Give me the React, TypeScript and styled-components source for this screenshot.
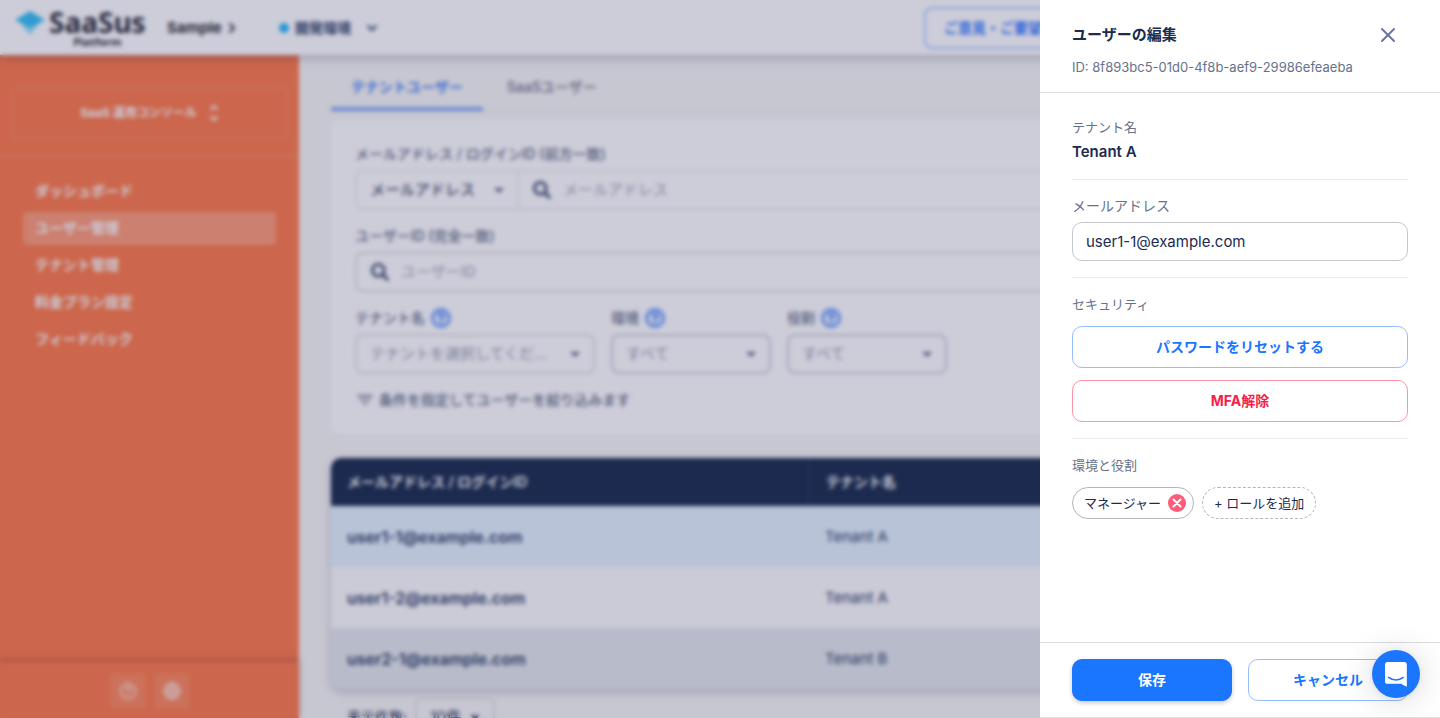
import React from 'react';
import styled, { createGlobalStyle, css } from 'styled-components';
import { ChevronDown, ChevronRight, CircleHelp, Globe, X } from 'lucide-react';
import { FaSearch } from 'react-icons/fa';
import { MdArrowDropDown, MdFilterList } from 'react-icons/md';

const GlobalStyle = createGlobalStyle`
  *, *::before, *::after { box-sizing: border-box; }
  body {
    margin: 0;
    overflow: hidden;
    background: #f7f7f5;
    color: #1c2b50;
    font-family: Inter, "Noto Sans CJK JP", sans-serif;
    font-size: 14px;
    line-height: 20px;
  }
  button, input, select { font: inherit; color: inherit; margin: 0; }
  button { cursor: pointer; }
`;

/* ---------- Console page ---------- */

const Page = styled.div`
  display: flex;
  flex-direction: column;
  height: 100vh;
  overflow: hidden;
`;

const TopBar = styled.header`
  display: flex;
  align-items: center;
  flex: none;
  height: 55px;
  padding-left: 15px;
  background: #fff;
  box-shadow: 0 2px 10px rgba(20, 20, 60, 0.3);
  z-index: 1;
`;

const Brand = styled.a`
  display: flex;
  gap: 4px;
  width: 152px;
  color: #222430;
  text-decoration: none;
`;

const BrandMark = styled.svg`
  flex: none;
  width: 30px;
  height: 24px;
  margin-top: 3px;
`;

const BrandText = styled.span`
  display: flex;
  flex-direction: column;
  align-items: center;
  font-family: "Noto Sans", sans-serif;
  font-weight: 700;
`;

const BrandName = styled.span`
  font-size: 28px;
  line-height: 28px;
`;

const BrandSub = styled.span`
  font-size: 11px;
  line-height: 12px;
`;

const Crumb = styled.a`
  display: flex;
  align-items: center;
  gap: 2px;
  width: 112px;
  color: #1b1d26;
  font-size: 15px;
  font-weight: 700;
  text-decoration: none;
`;

const EnvButton = styled.button`
  display: flex;
  align-items: center;
  gap: 6px;
  padding: 0;
  border: 0;
  background: none;
  font-weight: 700;
  color: #24365f;

  svg { margin-left: 7px; }
`;

const EnvDot = styled.span`
  width: 10px;
  height: 10px;
  border-radius: 50%;
  background: #20b4fa;
`;

const TopActions = styled.div`
  width: 516px;
  margin-left: auto;
`;

const FeedbackButton = styled.button`
  height: 42px;
  padding: 0 18px;
  border: 2px solid #a9c8ff;
  border-radius: 8px;
  background: #fff;
  color: #1a6aff;
  font-weight: 700;
`;

const Body = styled.div`
  display: flex;
  flex: 1;
  min-height: 0;
`;

const Sidebar = styled.aside`
  display: flex;
  flex-direction: column;
  flex: none;
  width: 299px;
  background: #fe7643;
  color: #fff;
`;

const SwitcherArea = styled.div`
  padding: 32px 11px 16px;
  border-bottom: 2px solid rgba(255, 255, 255, 0.15);
`;

const Switcher = styled.button`
  display: flex;
  align-items: center;
  justify-content: center;
  gap: 12px;
  width: 100%;
  height: 52px;
  border: 2px solid rgba(255, 255, 255, 0.12);
  border-radius: 6px;
  background: none;
  font-size: 12px;
  font-weight: 700;
`;

const Menu = styled.nav`
  display: flex;
  flex-direction: column;
  gap: 4px;
  padding: 18px 23px;
`;

const MenuLink = styled.a<{ $active?: boolean }>`
  padding: 6px 12px 7px;
  border-radius: 3px;
  background: ${({ $active }) => ($active ? 'rgba(255, 255, 255, 0.25)' : 'none')};
  color: #fff;
  font-weight: 700;
  text-decoration: none;
`;

const SidebarFooter = styled.div`
  display: flex;
  justify-content: center;
  gap: 8px;
  margin-top: auto;
  padding: 11px 0 9px;
  box-shadow: 0 -2px 6px rgba(90, 40, 60, 0.35);
`;

const SquareButton = styled.button`
  display: flex;
  align-items: center;
  justify-content: center;
  width: 36px;
  height: 36px;
  padding: 0;
  border: 0;
  border-radius: 4px;
  background: rgba(255, 255, 255, 0.1);
`;

const Main = styled.main`
  flex: 1;
  min-width: 0;
  padding: 12px 32px 0;
`;

const Tabs = styled.div`
  display: flex;
  gap: 4px;
  border-bottom: 1px solid #e8e8ea;
`;

const Tab = styled.button<{ $active?: boolean }>`
  height: 44px;
  padding: 0 20px;
  border: 0;
  border-bottom: 4px solid ${({ $active }) => ($active ? '#7da6f5' : 'transparent')};
  background: none;
  color: ${({ $active }) => ($active ? '#3f7ef7' : '#676b80')};
  font-weight: ${({ $active }) => ($active ? 600 : 500)};
`;

const FilterCard = styled.section`
  display: flex;
  flex-direction: column;
  gap: 16px;
  margin-top: 8px;
  padding: 24px;
  border-radius: 8px;
  background: #fff;
`;

const Field = styled.div<{ $width?: number }>`
  display: flex;
  flex-direction: column;
  gap: 6px;
  width: ${({ $width }) => ($width ? `${$width}px` : 'auto')};
`;

const FieldLabel = styled.label`
  display: flex;
  align-items: center;
  gap: 6px;
  color: #59637d;
  font-weight: 500;
`;

const FieldRow = styled.div`
  display: flex;
  gap: 16px;
`;

const Box = styled.div<{ $tone?: 'soft' | 'strong' }>`
  display: flex;
  height: 40px;
  border: 2px solid
    ${({ $tone }) => ($tone === 'soft' ? '#ededf0' : $tone === 'strong' ? '#c9cdd9' : '#dddde1')};
  border-radius: 8px;
`;

const SearchWrap = styled.div`
  display: flex;
  align-items: center;
  flex: 1;
  gap: 12px;
  padding: 0 14px;
  color: #3a4769;
`;

const SearchInput = styled.input`
  flex: 1;
  min-width: 0;
  padding: 0;
  border: 0;
  outline: 0;
  background: none;
  font-size: 15px;

  &::placeholder { color: #9aa1b2; opacity: 1; }
`;

const SelectWrap = styled.div<{ $divided?: boolean }>`
  display: flex;
  position: relative;
  align-items: center;
  flex: ${({ $divided }) => ($divided ? 'none' : '1')};
  width: ${({ $divided }) => ($divided ? '162px' : 'auto')};
  border-right: ${({ $divided }) => ($divided ? '2px solid #ededf0' : '0')};

  svg {
    position: absolute;
    right: 6px;
    color: #59637d;
    pointer-events: none;
  }
`;

const Select = styled.select<{ $muted?: boolean }>`
  appearance: none;
  width: 100%;
  height: 100%;
  padding: 0 24px 0 13px;
  border: 0;
  background: none;
  color: ${({ $muted }) => ($muted ? '#8f97aa' : '#3d4865')};
  font-size: 15px;
  font-weight: ${({ $muted }) => ($muted ? 400 : 500)};
`;

const Hint = styled.p`
  display: flex;
  align-items: center;
  gap: 4px;
  margin: 0;
  color: #59637d;
  font-weight: 500;
`;

const UserTable = styled.table`
  width: 100%;
  margin-top: 24px;
  border-spacing: 0;
  border-radius: 10px;
  overflow: hidden;
  table-layout: fixed;
  box-shadow: 0 3px 8px rgba(30, 30, 90, 0.25);
`;

const HeadCell = styled.th<{ $wide?: boolean }>`
  width: ${({ $wide }) => ($wide ? '478px' : 'auto')};
  height: 48px;
  padding: 0 16px;
  border-left: ${({ $wide }) => ($wide ? '0' : '1px solid #1f3358')};
  background: #132647;
  color: #fff;
  text-align: left;
  font-weight: 600;
`;

const Row = styled.tr<{ $tone: string }>`
  background: ${({ $tone }) => $tone};
`;

const Cell = styled.td<{ $strong?: boolean }>`
  height: 61px;
  padding: 0 16px;
  font-size: ${({ $strong }) => ($strong ? '16px' : '15px')};
  font-weight: ${({ $strong }) => ($strong ? 600 : 400)};
  color: #24345c;
`;

const Pager = styled.div`
  display: flex;
  align-items: center;
  gap: 8px;
  padding: 8px 16px;
`;

const PagerLabel = styled.label`
  color: #3d4865;
  font-weight: 500;
`;

const PagerBox = styled(Box)`
  width: 80px;
`;

/* ---------- Edit drawer ---------- */

const Backdrop = styled.div`
  position: fixed;
  inset: 0;
  z-index: 10;
  background: rgba(55, 55, 103, 0.25);
  backdrop-filter: blur(2px);
`;

const Drawer = styled.aside`
  display: flex;
  position: fixed;
  top: 0;
  right: 0;
  bottom: 0;
  z-index: 20;
  flex-direction: column;
  width: 400px;
  border-bottom: 1px solid #e2e2e6;
  background: #fff;
`;

const DrawerHeader = styled.header`
  padding: 24px 32px 15px;
  border-bottom: 1px solid #dcdde1;
`;

const TitleRow = styled.div`
  display: flex;
  align-items: center;
  justify-content: space-between;
  height: 22px;
`;

const Title = styled.h2`
  margin: 0;
  font-size: 15px;
  line-height: 22px;
  font-weight: 700;
`;

const CloseButton = styled.button`
  display: flex;
  padding: 0 8px;
  border: 0;
  background: none;
  color: #6d73a0;
`;

const UserId = styled.p`
  margin: 11px 0 0;
  color: #66718a;
  font-size: 13px;
`;

const DrawerBody = styled.div`
  flex: 1;
  min-height: 0;
  padding: 8px 32px;
  overflow: auto;
`;

const Section = styled.section`
  padding: 16px 0;

  & + & { border-top: 1px solid #e9eaec; }
`;

const labelStyle = css`
  display: block;
  margin: 0;
  color: #66718a;
  font-weight: 400;
  line-height: 20px;
`;

const SectionTitle = styled.h3`
  ${labelStyle}
  font-size: 13px;
`;

const InputLabel = styled.label`
  ${labelStyle}
  margin-bottom: 6px;
  font-size: 14px;
`;

const TenantName = styled.p`
  margin: 4px 0 0;
  font-size: 15px;
  line-height: 22px;
  font-weight: 600;
`;

const TextInput = styled.input`
  display: block;
  width: 100%;
  height: 39px;
  padding: 0 13px;
  border: 1px solid #c6c7ca;
  border-radius: 10px;
  outline: 0;
  background: #fff;
  font-size: 15px;
`;

const ButtonStack = styled.div`
  display: grid;
  gap: 12px;
  margin-top: 12px;
`;

const tones = {
  primary: css`
    border-color: #1a75ff;
    background: #1a75ff;
    color: #fff;
    box-shadow: 0 2px 4px rgba(40, 40, 60, 0.25);
  `,
  outline: css`
    border-color: #94bcff;
    background: #fff;
    color: #1a75ff;
  `,
  danger: css`
    border-color: #ff94a5;
    background: #fff;
    color: #f71d4c;
  `,
};

const ActionButton = styled.button<{ $tone: keyof typeof tones }>`
  height: 42px;
  padding: 0 12px;
  border: 1px solid;
  border-radius: 10px;
  font-weight: 700;
  ${({ $tone }) => tones[$tone]}
`;

const Chips = styled.div`
  display: flex;
  gap: 8px;
  margin-top: 12px;
`;

const chipStyle = css`
  display: flex;
  align-items: center;
  height: 32px;
  border: 1px solid #b4b6bb;
  border-radius: 16px;
  background: #fff;
  font-size: 13px;
`;

const RoleChip = styled.span`
  ${chipStyle}
  gap: 7px;
  padding: 0 7px 0 11px;
`;

const RemoveRole = styled.button`
  display: flex;
  padding: 0;
  border: 0;
  background: none;
`;

const AddRole = styled.button`
  ${chipStyle}
  padding: 0 11px;
  border-style: dashed;
`;

const DrawerFooter = styled.footer`
  display: grid;
  grid-template-columns: 1fr 1fr;
  gap: 16px;
  padding: 16px 32px;
  border-top: 1px solid #dcdde1;
`;

const ChatLauncher = styled.button`
  display: flex;
  position: fixed;
  right: 20px;
  bottom: 20px;
  z-index: 30;
  align-items: center;
  justify-content: center;
  width: 48px;
  height: 48px;
  padding: 0;
  border: 0;
  border-radius: 50%;
  background: #1a75ff;
  box-shadow: 0 1px 6px rgba(0, 0, 0, 0.08), 0 2px 32px rgba(0, 0, 0, 0.16);
`;

const menu = ['ダッシュボード', 'ユーザー管理', 'テナント管理', '料金プラン設定', 'フィードバック'];

const users = [
  { email: 'user1-1@example.com', tenant: 'Tenant A', tone: '#e4f2fe' },
  { email: 'user1-2@example.com', tenant: 'Tenant A', tone: '#fcfcfc' },
  { email: 'user2-1@example.com', tenant: 'Tenant B', tone: '#e3e8eb' },
];

const scopes = [
  { id: 'tenant', label: 'テナント名', value: 'テナントを選択してくだ...', width: 240, strong: false },
  { id: 'env', label: '環境', value: 'すべて', width: 160, strong: true },
  { id: 'role', label: '役割', value: 'すべて', width: 160, strong: true },
];

function Console() {
  return (
    <Page>
      <TopBar>
        <Brand href="#">
          <BrandMark viewBox="0 0 30 24" aria-hidden="true">
            <path d="M15 0 30 9 15 17 0 9Z" fill="#2dbdf3" />
            <path d="M5 12 15 17 25 12 15 24Z" fill="#8fdcfa" />
          </BrandMark>
          <BrandText>
            <BrandName>SaaSus</BrandName>
            <BrandSub>Platform</BrandSub>
          </BrandText>
        </Brand>
        <Crumb href="#">
          Sample <ChevronRight size={16} strokeWidth={3} />
        </Crumb>
        <EnvButton>
          <EnvDot />
          開発環境
          <ChevronDown size={16} strokeWidth={3} />
        </EnvButton>
        <TopActions>
          <FeedbackButton>ご意見・ご要望</FeedbackButton>
        </TopActions>
      </TopBar>
      <Body>
        <Sidebar>
          <SwitcherArea>
            <Switcher>
              SaaS 運用コンソール
              <svg width="10" height="18" viewBox="0 0 10 18" fill="none" stroke="currentColor" strokeWidth="2">
                <path d="M1.5 5.5 5 2l3.5 3.5M1.5 12.5 5 16l3.5-3.5" />
              </svg>
            </Switcher>
          </SwitcherArea>
          <Menu>
            {menu.map((item, i) => (
              <MenuLink key={item} href="#" $active={i === 1}>
                {item}
              </MenuLink>
            ))}
          </Menu>
          <SidebarFooter>
            <SquareButton aria-label="ヘルプ">
              <CircleHelp size={18} strokeWidth={3} opacity={0.6} />
            </SquareButton>
            <SquareButton aria-label="言語">
              <Globe size={18} strokeWidth={3} opacity={0.7} />
            </SquareButton>
          </SidebarFooter>
        </Sidebar>
        <Main>
          <Tabs>
            <Tab $active>テナントユーザー</Tab>
            <Tab>SaaSユーザー</Tab>
          </Tabs>
          <FilterCard>
            <Field>
              <FieldLabel htmlFor="f-mail">メールアドレス / ログインID (前方一致)</FieldLabel>
              <Box $tone="soft">
                <SelectWrap $divided>
                  <Select aria-label="検索対象">
                    <option>メールアドレス</option>
                  </Select>
                  <MdArrowDropDown size={24} />
                </SelectWrap>
                <SearchWrap>
                  <FaSearch size={18} />
                  <SearchInput id="f-mail" placeholder="メールアドレス" />
                </SearchWrap>
              </Box>
            </Field>
            <Field>
              <FieldLabel htmlFor="f-id">ユーザーID (完全一致)</FieldLabel>
              <Box>
                <SearchWrap>
                  <FaSearch size={18} />
                  <SearchInput id="f-id" placeholder="ユーザーID" />
                </SearchWrap>
              </Box>
            </Field>
            <FieldRow>
              {scopes.map((s) => (
                <Field key={s.id} $width={s.width}>
                  <FieldLabel htmlFor={`f-${s.id}`}>
                    {s.label}
                    <CircleHelp size={20} strokeWidth={4} color="#6a9cfc" />
                  </FieldLabel>
                  <Box $tone={s.strong ? 'strong' : undefined}>
                    <SelectWrap>
                      <Select id={`f-${s.id}`} $muted>
                        <option>{s.value}</option>
                      </Select>
                      <MdArrowDropDown size={24} />
                    </SelectWrap>
                  </Box>
                </Field>
              ))}
            </FieldRow>
            <Hint>
              <MdFilterList size={20} />
              条件を指定してユーザーを絞り込みます
            </Hint>
          </FilterCard>
          <UserTable>
            <thead>
              <tr>
                <HeadCell $wide>メールアドレス / ログインID</HeadCell>
                <HeadCell>テナント名</HeadCell>
              </tr>
            </thead>
            <tbody>
              {users.map((u) => (
                <Row key={u.email} $tone={u.tone}>
                  <Cell $strong>{u.email}</Cell>
                  <Cell>{u.tenant}</Cell>
                </Row>
              ))}
            </tbody>
          </UserTable>
          <Pager>
            <PagerLabel htmlFor="f-size">表示件数:</PagerLabel>
            <PagerBox>
              <SelectWrap>
                <Select id="f-size">
                  <option>10件</option>
                </Select>
                <MdArrowDropDown size={24} />
              </SelectWrap>
            </PagerBox>
          </Pager>
        </Main>
      </Body>
    </Page>
  );
}

function EditDrawer() {
  return (
    <Drawer role="dialog" aria-labelledby="drawer-title">
      <DrawerHeader>
        <TitleRow>
          <Title id="drawer-title">ユーザーの編集</Title>
          <CloseButton aria-label="閉じる">
            <X size={24} strokeWidth={2} />
          </CloseButton>
        </TitleRow>
        <UserId>ID: 8f893bc5-01d0-4f8b-aef9-29986efeaeba</UserId>
      </DrawerHeader>
      <DrawerBody>
        <Section>
          <SectionTitle>テナント名</SectionTitle>
          <TenantName>Tenant A</TenantName>
        </Section>
        <Section>
          <InputLabel htmlFor="email">メールアドレス</InputLabel>
          <TextInput id="email" type="email" defaultValue="user1-1@example.com" />
        </Section>
        <Section>
          <SectionTitle>セキュリティ</SectionTitle>
          <ButtonStack>
            <ActionButton $tone="outline">パスワードをリセットする</ActionButton>
            <ActionButton $tone="danger">MFA解除</ActionButton>
          </ButtonStack>
        </Section>
        <Section>
          <SectionTitle>環境と役割</SectionTitle>
          <Chips>
            <RoleChip>
              マネージャー
              <RemoveRole aria-label="マネージャーを削除">
                <svg width="18" height="18" viewBox="0 0 18 18">
                  <circle cx="9" cy="9" r="9" fill="#ff5c79" />
                  <path d="M5.5 5.5l7 7M12.5 5.5l-7 7" stroke="#fff" strokeWidth="2" strokeLinecap="round" />
                </svg>
              </RemoveRole>
            </RoleChip>
            <AddRole>+ ロールを追加</AddRole>
          </Chips>
        </Section>
      </DrawerBody>
      <DrawerFooter>
        <ActionButton $tone="primary">保存</ActionButton>
        <ActionButton $tone="outline">キャンセル</ActionButton>
      </DrawerFooter>
    </Drawer>
  );
}

export default function App() {
  return (
    <>
      <GlobalStyle />
      <Console />
      <Backdrop />
      <EditDrawer />
      <ChatLauncher aria-label="チャットを開く">
        <svg width="22" height="25" viewBox="0 0 22 25">
          <path
            d="M2.6 0H19.2A2.6 2.6 0 0 1 21.8 2.6V24.6S18.6 23.7 16.4 21.8H2.6A2.6 2.6 0 0 1 0 19.2V2.6A2.6 2.6 0 0 1 2.6 0Z"
            fill="#fff"
          />
          <path d="M3.6 15.4C7.6 18.7 14.2 18.7 18.2 15.4" fill="none" stroke="#1a75ff" strokeWidth="1.5" strokeLinecap="round" />
        </svg>
      </ChatLauncher>
    </>
  );
}
